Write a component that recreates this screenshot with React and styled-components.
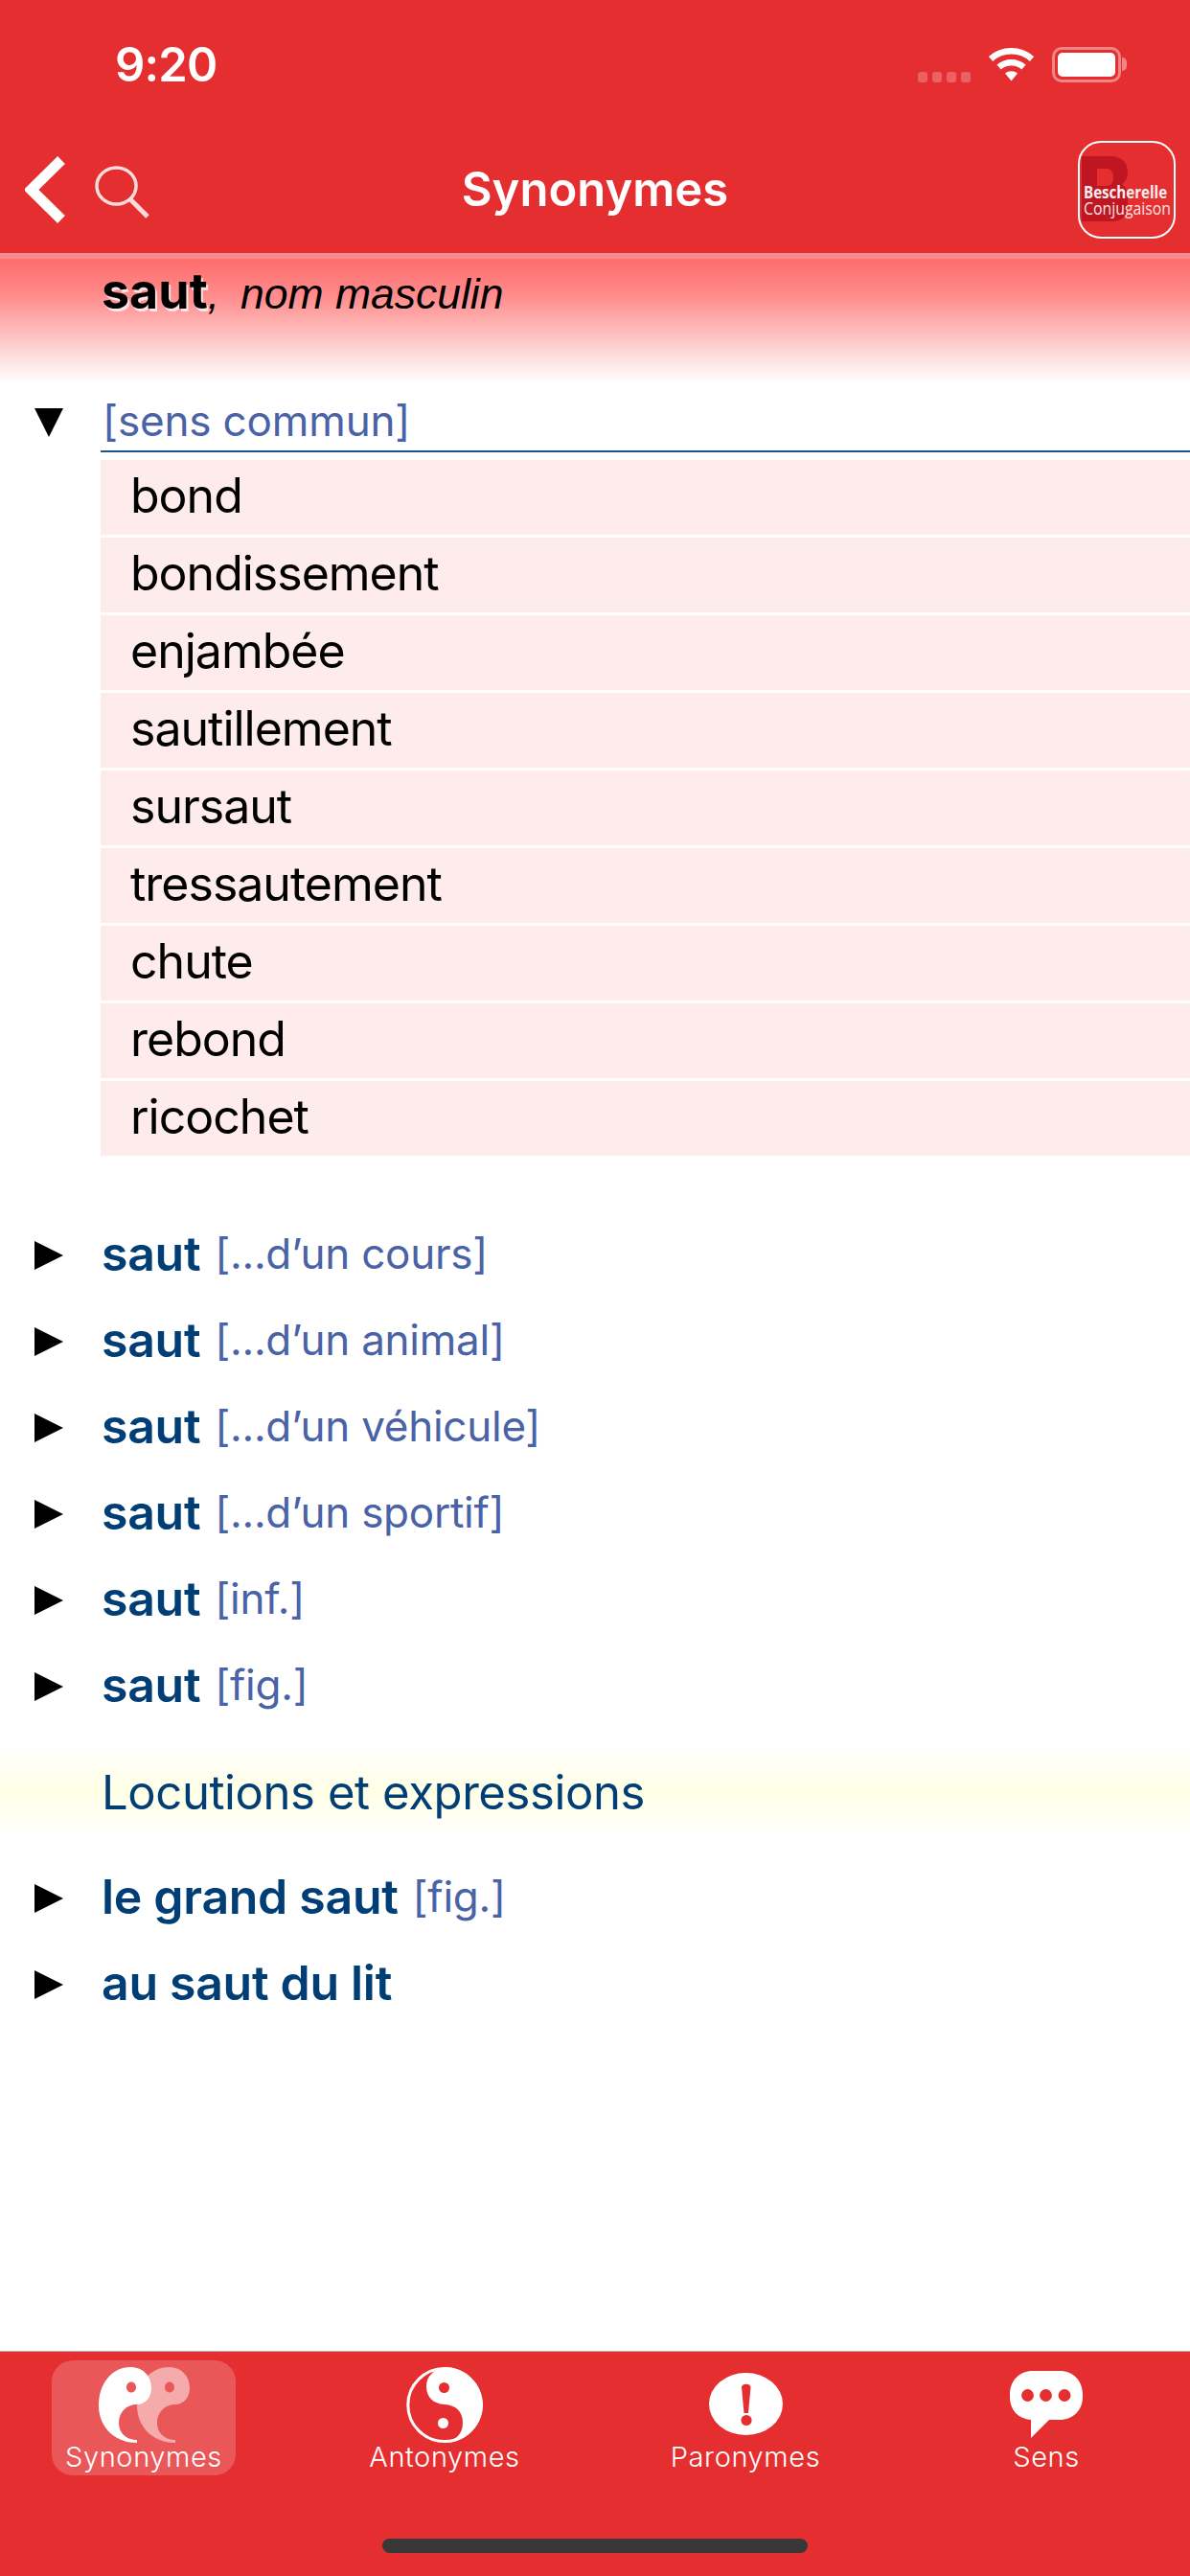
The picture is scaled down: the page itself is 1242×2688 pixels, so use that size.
import React from "react";
import styled, { createGlobalStyle } from "styled-components";

const Global = createGlobalStyle`
  html, body { margin: 0; padding: 0; background: #fff; }
  #root { width: 1242px; height: 2688px; overflow: hidden; }
  * { box-sizing: border-box; }
`;

const Page = styled.div`
  width: 1242px;
  height: 2688px;
  display: flex;
  flex-direction: column;
  background: #fff;
  font-family: Inter, "Liberation Sans", sans-serif;
`;

const TopBar = styled.header`
  height: 264px;
  background: #e52e30;
  color: #fff;
  display: flex;
  flex-direction: column;
`;

const StatusBar = styled.div`
  height: 132px;
  padding: 38px 72px 0 120px;
  display: flex;
  justify-content: space-between;
  align-items: flex-start;
`;

const Clock = styled.span`
  font-size: 49px;
  font-weight: 600;
  line-height: 60px;
  letter-spacing: -0.8px;
`;

const NavBar = styled.nav`
  position: relative;
  height: 132px;
  display: flex;
  align-items: flex-start;
  justify-content: center;
`;

const NavTitle = styled.h1`
  margin: 0;
  font-size: 49px;
  line-height: 60px;
  font-weight: 600;
  padding-top: 36px;
`;

const NavLeft = styled.div`
  position: absolute;
  left: 26px;
  top: 31px;
  display: flex;
  gap: 30px;
`;

const LogoBox = styled.div`
  position: absolute;
  left: 1125px;
  top: 15px;
  width: 102px;
  height: 102px;
  border: 2px solid #fff;
  border-radius: 24px;
  overflow: hidden;
`;

const EntryHead = styled.div`
  height: 136px;
  border-top: 6px solid #f58c8c;
  background: linear-gradient(180deg, #ff6c6c 0%, #ff8c8c 30%, #fdd0d0 70%, #fff 100%);
  padding: 4px 0 0 106px;
  display: flex;
  align-items: baseline;
`;

const Word = styled.span`
  font-size: 52px;
  line-height: 60px;
  font-weight: 700;
  color: #000;
  text-shadow: 2px 3px 0 rgba(255, 255, 255, 0.75);
`;

const Comma = styled.span`
  font-family: "Liberation Sans", sans-serif;
  font-size: 44px;
  font-style: italic;
  color: #000;
  margin-right: 22px;
`;

const Category = styled.span`
  font-family: "Liberation Sans", sans-serif;
  font-size: 44.5px;
  font-style: italic;
  color: #000;
`;

const Content = styled.main`
  flex: 1;
  display: flex;
  flex-direction: column;
`;

const OpenBlock = styled.section`
  display: grid;
  grid-template-columns: 105px 1fr;
  padding-top: 16px;
`;

const OpenTriangle = styled.svg`
  width: 30px;
  height: 30px;
  margin: 10px 0 0 36px;
`;

const SenseTitle = styled.div`
  height: 56px;
  border-bottom: 2px solid #1a5488;
  font-size: 44px;
  line-height: 46px;
  letter-spacing: -0.15px;
  color: #4a62a6;
  padding-left: 2px;
`;

const SynList = styled.ul`
  list-style: none;
  margin: 8px 0 0;
  padding: 0;
  grid-column: 2;
  display: flex;
  flex-direction: column;
  gap: 3px;
`;

const SynRow = styled.li`
  height: 78px;
  background: #feecec;
  padding-left: 31px;
  font-size: 50px;
  letter-spacing: -1px;
  line-height: 74px;
  color: #000;
`;

const Collapsed = styled.ul`
  list-style: none;
  margin: ${(p) => p.$top}px 0 0;
  padding: 0;
  display: flex;
  flex-direction: column;
`;

const CollapsedRow = styled.li`
  height: 90px;
  display: flex;
  align-items: center;
  padding-left: 36px;
`;

const ClosedTriangle = styled.svg`
  width: 30px;
  height: 30px;
  margin-right: 40px;
  flex: none;
  position: relative;
  top: 2px;
`;

const Term = styled.span`
  font-size: 50px;
  font-weight: 600;
  letter-spacing: -0.3px;
  color: #003e75;
  margin-right: 15px;
`;

const Sense = styled.span`
  font-size: 44px;
  letter-spacing: -0.25px;
  color: #4a62a6;
`;

const SectionBand = styled.div`
  margin-top: 18px;
  height: 98px;
  padding-left: 106px;
  display: flex;
  align-items: center;
  font-size: 49px;
  letter-spacing: -0.4px;
  color: #003e75;
  background: linear-gradient(180deg, #fff 0%, #ffffe6 50%, #fff 100%);
`;

const TabBar = styled.footer`
  height: 235px;
  background: #e52e30;
  border-top: 1px solid #b4b4b4;
  display: flex;
  flex-direction: column;
`;

const Tabs = styled.div`
  display: grid;
  grid-template-columns: repeat(4, 192px);
  column-gap: 122px;
  padding: 9px 0 0 54px;
`;

const Tab = styled.div`
  height: 120px;
  border-radius: 22px;
  background: ${(p) => (p.$active ? "rgba(255,255,255,0.2)" : "transparent")};
  display: flex;
  flex-direction: column;
  align-items: center;
`;

const TabIconSlot = styled.div`
  height: 83px;
  width: 100%;
  flex: none;
  display: flex;
  justify-content: center;
  align-items: flex-start;
  padding-top: ${(p) => p.$top}px;
`;

const TabLabel = styled.span`
  font-size: 29px;
  line-height: 36px;
  font-weight: 350;
  color: #fff;
  letter-spacing: 0.6px;
`;

const HomeBar = styled.div`
  width: 444px;
  height: 15px;
  border-radius: 8px;
  background: #383838;
  margin: 66px 0 0 399px;
`;

const Dots = styled.div`
  display: flex;
  gap: 5px;
  margin: 26px 19px 0 0;
`;

const Dot = styled.i`
  width: 10px;
  height: 11px;
  border-radius: 3px;
  background: rgba(255, 255, 255, 0.25);
`;

const StatusIcons = styled.div`
  display: flex;
  align-items: flex-start;
  margin-top: 11px;
`;

const BatteryShell = styled.div`
  width: 72px;
  height: 37px;
  border: 3px solid rgba(255, 255, 255, 0.42);
  border-radius: 10px;
  padding: 3px;
  margin-left: 19px;
  position: relative;
  &::after {
    content: "";
    position: absolute;
    right: -9px;
    top: 8px;
    width: 5px;
    height: 14px;
    border-radius: 0 5px 5px 0;
    background: rgba(255, 255, 255, 0.42);
  }
`;

const BatteryFill = styled.div`
  height: 100%;
  background: #fff;
  border-radius: 5px;
`;

const Wifi = () => (
  <svg width="47" height="36" viewBox="0 0 47 36" style={{ display: "block" }}>
    <path d="M2 12.5C14 1.5 33 1.5 45 12.5" fill="none" stroke="#fff" strokeWidth="6.5" />
    <path d="M10.5 21C18 14.5 29 14.5 36.5 21" fill="none" stroke="#fff" strokeWidth="6.5" />
    <path d="M17 27.5C21 24.5 26 24.5 30 27.5L23.5 35.5Z" fill="#fff" />
  </svg>
);

const Chevron = () => (
  <svg width="43" height="70" viewBox="0 0 43 70">
    <path d="M38 4L6.5 35L38 66" fill="none" stroke="#fff" strokeWidth="11" />
  </svg>
);

const Search = () => (
  <svg width="58" height="56" viewBox="0 0 58 56" style={{ marginTop: 10 }}>
    <ellipse cx="22.5" cy="21" rx="20.5" ry="19" fill="none" stroke="#fbdcdc" strokeWidth="3.5" />
    <path d="M37 35L55 53" fill="none" stroke="#fbdcdc" strokeWidth="5" />
  </svg>
);

const Logo = () => (
  <svg width="98" height="98" viewBox="0 0 98 98" style={{ display: "block" }}>
    <path
      fillRule="evenodd"
      fill="#bf1622"
      d="M2 14H32C44 14 50 21 50 31C50 37 47 41 44 43C48 46 50 50 50 56V66C50 76 44 82 34 82H2ZM18 27V45H28C33 45 35 41 35 36C35 31 33 27 28 27Z"
    />
    <text transform="translate(4 58) scale(0.84 1)" fontFamily="'Open Sans', sans-serif" fontWeight="700" fontSize="18" fill="#fbeeee">
      Bescherelle
    </text>
    <text transform="translate(4 75) scale(0.88 1)" fontFamily="'Open Sans', sans-serif" fontWeight="400" fontSize="18" fill="#fbe4e4">
      Conjugaison
    </text>
  </svg>
);

const COMMA = "M33 0C46 0 55 9 55 22C55 31 49 39 40 39C29 39 21 47 21 58C21 68 28 76 40 76V79C16 79 0 62 0 40C0 17 14 0 33 0ZM34 15.5C31 15.5 29 18 29 21C29 24 31 26.5 34 26.5C37 26.5 39 24 39 21C39 18 37 15.5 34 15.5Z";

const SynIcon = () => (
  <svg width="95" height="79" viewBox="0 0 95 79">
    <path d={COMMA} transform="translate(40 0)" fill="#fff" fillOpacity="0.5" fillRule="evenodd" />
    <path d={COMMA} fill="#fff" fillRule="evenodd" />
  </svg>
);

const AntIcon = () => (
  <svg width="80" height="79" viewBox="0 0 80 79">
    <ellipse cx="40" cy="39.5" rx="38.2" ry="38" fill="none" stroke="#fff" strokeWidth="3" />
    <path d="M40 0C62 0 80 18 80 39.5C80 61 62 79 40 79C52 76 59 70 59 58C59 47 52 39.5 40 39C28 38.5 21 31 21 20C21 10 28 3 40 0Z" fill="#fff" />
    <ellipse cx="39.5" cy="21.5" rx="5.5" ry="5.5" fill="#e52e30" />
    <ellipse cx="38.5" cy="58.5" rx="5.5" ry="5.5" fill="#fff" />
  </svg>
);

const ParIcon = () => (
  <svg width="77" height="65" viewBox="0 0 77 65">
    <ellipse cx="38.5" cy="32.5" rx="38.5" ry="32.5" fill="#fff" />
    <path d="M34 15C34 10.5 43.5 10.5 43.5 15L41 42H36.5Z" fill="#e52e30" />
    <circle cx="39" cy="49.5" r="5.6" fill="#e52e30" />
  </svg>
);

const SensIcon = () => (
  <svg width="76" height="70" viewBox="0 0 76 70">
    <path d="M24 0H52C66 0 76 10 76 25V27C76 41 66 51 52 51H41L22 70V51C9 50 0 41 0 27V25C0 10 10 0 24 0Z" fill="#fff" />
    <circle cx="18.5" cy="25.5" r="6.4" fill="#e52e30" />
    <circle cx="37.5" cy="25.5" r="6.4" fill="#e52e30" />
    <circle cx="57" cy="25.5" r="6.4" fill="#e52e30" />
  </svg>
);

const TriRight = () => (
  <ClosedTriangle viewBox="0 0 30 30">
    <path d="M0 0L30 15L0 30Z" fill="#000" />
  </ClosedTriangle>
);

const synonyms = ["bond", "bondissement", "enjambée", "sautillement", "sursaut", "tressautement", "chute", "rebond", "ricochet"];
const senses = ["[...d’un cours]", "[...d’un animal]", "[...d’un véhicule]", "[...d’un sportif]", "[inf.]", "[fig.]"];

const tabs = [
  { label: "Synonymes", icon: <SynIcon />, top: 7, active: true },
  { label: "Antonymes", icon: <AntIcon />, top: 7 },
  { label: "Paronymes", icon: <ParIcon />, top: 13 },
  { label: "Sens", icon: <SensIcon />, top: 11 },
];

export default function App() {
  return (
    <Page>
      <Global />
      <TopBar>
        <StatusBar>
          <Clock>9:20</Clock>
          <StatusIcons>
            <Dots>
              <Dot /><Dot /><Dot /><Dot />
            </Dots>
            <Wifi />
            <BatteryShell><BatteryFill /></BatteryShell>
          </StatusIcons>
        </StatusBar>
        <NavBar>
          <NavLeft>
            <Chevron />
            <Search />
          </NavLeft>
          <NavTitle>Synonymes</NavTitle>
          <LogoBox><Logo /></LogoBox>
        </NavBar>
      </TopBar>
      <EntryHead>
        <Word>saut</Word>
        <Comma>,</Comma>
        <Category>nom masculin</Category>
      </EntryHead>
      <Content>
        <OpenBlock>
          <OpenTriangle viewBox="0 0 30 30">
            <path d="M0 0H30L15 30Z" fill="#000" />
          </OpenTriangle>
          <SenseTitle>[sens commun]</SenseTitle>
          <SynList>
            {synonyms.map((s) => (
              <SynRow key={s}>{s}</SynRow>
            ))}
          </SynList>
        </OpenBlock>
        <Collapsed $top={57}>
          {senses.map((s) => (
            <CollapsedRow key={s}>
              <TriRight />
              <Term>saut</Term>
              <Sense>{s}</Sense>
            </CollapsedRow>
          ))}
        </Collapsed>
        <SectionBand>Locutions et expressions</SectionBand>
        <Collapsed $top={15}>
          <CollapsedRow>
            <TriRight />
            <Term>le grand saut</Term>
            <Sense>[fig.]</Sense>
          </CollapsedRow>
          <CollapsedRow>
            <TriRight />
            <Term>au saut du lit</Term>
          </CollapsedRow>
        </Collapsed>
      </Content>
      <TabBar>
        <Tabs>
          {tabs.map((t) => (
            <Tab key={t.label} $active={t.active}>
              <TabIconSlot $top={t.top}>{t.icon}</TabIconSlot>
              <TabLabel>{t.label}</TabLabel>
            </Tab>
          ))}
        </Tabs>
        <HomeBar />
      </TabBar>
    </Page>
  );
}
